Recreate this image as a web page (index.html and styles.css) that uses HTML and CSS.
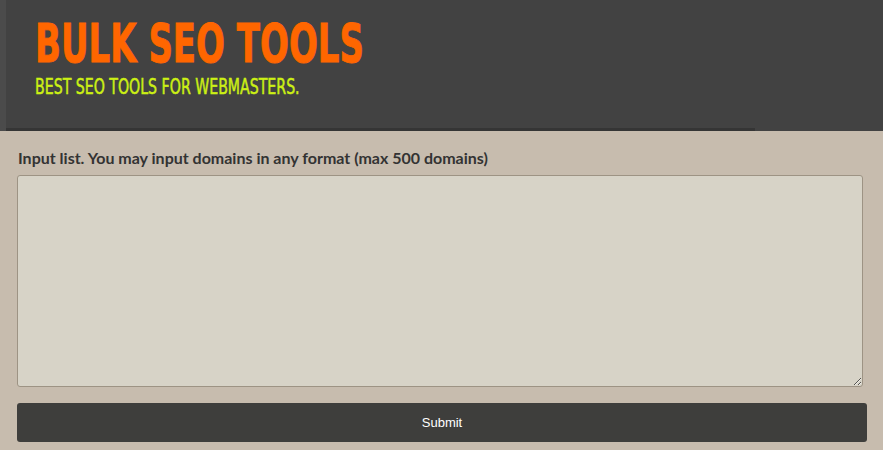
FILE: index.html
```html
<!DOCTYPE html>
<html>
<head>
<meta charset="utf-8">
<link rel="stylesheet" href="styles.css">
</head>
<body>
<header class="site-header">
  <div class="brand">
    <h1 class="brand-title">BULK SEO TOOLS</h1>
    <p class="brand-tagline">BEST SEO TOOLS FOR WEBMASTERS.</p>
  </div>
  <div class="header-rule"></div>
</header>
<main class="content">
  <form class="tool-form">
    <label class="field-label" for="domains">Input list. You may input domains in any format (max 500 domains)</label>
    <textarea id="domains" class="domains-input"></textarea>
    <button type="button" class="submit-btn">Submit</button>
  </form>
</main>
</body>
</html>
```
FILE: styles.css
```css
html, body {
  margin: 0;
  padding: 0;
}
body {
  background: #c7bcae;
  font-family: "Lato", "Liberation Sans", sans-serif;
  height: 450px;
  overflow: hidden;
}
.site-header {
  background: #424242;
  border-left: 6px solid #4b4b4b;
  height: 131px;
  display: flex;
  flex-direction: column;
  justify-content: space-between;
}
.brand {
  padding: 15px 0 0 29px;
}
.brand-title {
  margin: 0;
  font-family: "DejaVu Sans Condensed", "DejaVu Sans", sans-serif;
  font-weight: 700;
  font-size: 54px;
  line-height: 58px;
  color: #ff6600;
  -webkit-text-stroke: 0.8px #ff6600;
  transform: scaleX(0.70);
  transform-origin: left center;
  white-space: nowrap;
}
.brand-tagline {
  margin: 1px 0 0 0;
  font-family: "DejaVu Sans Condensed", "DejaVu Sans", sans-serif;
  font-weight: 400;
  font-size: 22px;
  line-height: 26px;
  color: #ccf014;
  -webkit-text-stroke: 0.5px #ccf014;
  transform: scaleX(0.715);
  transform-origin: left center;
  white-space: nowrap;
}
.header-rule {
  width: 749px;
  height: 3px;
  background: #353535;
}
.content {
  padding: 17px 16px 0 17px;
}
.tool-form {
  display: flex;
  flex-direction: column;
}
.field-label {
  font-weight: 700;
  font-size: 16px;
  line-height: 20px;
  color: #333333;
  padding-left: 1px;
}
.domains-input {
  margin-top: 7px;
  width: 846px;
  height: 212px;
  box-sizing: border-box;
  background: #d7d3c7;
  border: 1px solid #9d9384;
  border-radius: 3px;
  resize: vertical;
  font-family: "Lato", sans-serif;
}
.submit-btn {
  margin-top: 16px;
  height: 39px;
  width: 100%;
  background: #3e3e3c;
  border: none;
  border-radius: 3px;
  color: #ffffff;
  font-family: "Liberation Sans", Arial, sans-serif;
  font-size: 13px;
}
```
